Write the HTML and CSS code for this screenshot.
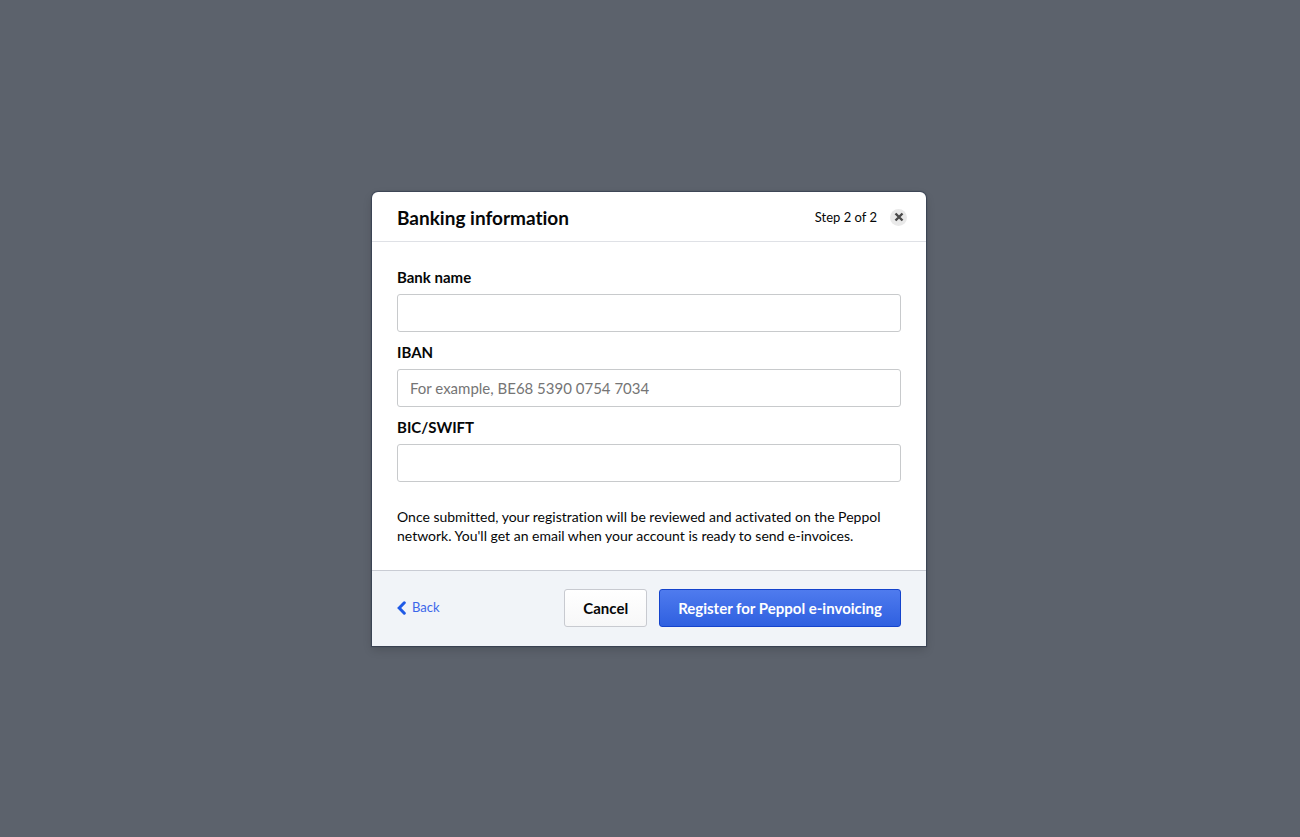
FILE: index.html
```html
<!DOCTYPE html>
<html lang="en">
<head>
    <meta charset="UTF-8">
    <meta name="viewport" content="width=device-width, initial-scale=1.0">
    <title>Banking information</title>
    <link rel="stylesheet" href="styles.css">
</head>
<body>
    <form class="modal" role="dialog" aria-labelledby="modal-title">
        <header class="modal-header">
            <h1 id="modal-title">Banking information</h1>
            <span class="step">Step 2 of 2</span>
            <button type="button" class="close" aria-label="Close">
                <svg width="10" height="10" viewBox="0 0 10 10"><path d="M1.500 1.500l7 7M8.500 1.500l-7 7" stroke="#4a4a4a" stroke-width="2.400"/></svg>
            </button>
        </header>

        <div class="modal-body">
            <div class="field">
                <label for="bank-name">Bank name</label>
                <input type="text" id="bank-name">
            </div>
            <div class="field">
                <label for="iban">IBAN</label>
                <input type="text" id="iban" placeholder="For example, BE68 5390 0754 7034">
            </div>
            <div class="field">
                <label for="bic">BIC/SWIFT</label>
                <input type="text" id="bic">
            </div>
            <p class="note">Once submitted, your registration will be reviewed and activated on the Peppol network. You'll get an email when your account is ready to send e-invoices.</p>
        </div>

        <footer class="modal-footer">
            <a href="#" class="back">
                <svg width="9" height="14" viewBox="0 0 9 14"><path d="M7.300 1.800L2.200 7l5.100 5.200" fill="none" stroke="#1f5ae6" stroke-width="3" stroke-linecap="round"/></svg>
                Back
            </a>
            <button type="button" class="btn">Cancel</button>
            <button type="submit" class="btn btn-primary">Register for Peppol e-invoicing</button>
        </footer>
    </form>
</body>
</html>
```

FILE: styles.css
```css
* {
    box-sizing: border-box;
}
body {
    margin: 0;
    padding-right: 2px;
    min-height: 100vh;
    display: flex;
    align-items: center;
    justify-content: center;
    background: #5c626c;
    color: #060708;
    font-family: Lato, sans-serif;
    font-size: 15px;
    line-height: 19px;
    font-variant-ligatures: none;
}
.modal {
    width: 100%;
    max-width: 554px;
    background: #fff;
    border-radius: 6px 6px 0 0;
    box-shadow: 0 0 1px 1px rgba(30, 41, 66, 0.5), 0 4px 10px rgba(0, 0, 0, 0.15);
}
.modal-header {
    display: flex;
    align-items: center;
    padding: 13px 19px 11px 25px;
    border-bottom: 1px solid #dfe1e6;
}
.modal-header h1 {
    flex: 1;
    margin: 0;
    font-size: 19px;
    line-height: 25px;
}
.step {
    font-size: 13px;
}
.close {
    display: flex;
    align-items: center;
    justify-content: center;
    width: 17px;
    height: 17px;
    margin-left: 13px;
    padding: 0;
    border: none;
    border-radius: 50%;
    background: #e9e9e9;
    cursor: pointer;
}
.modal-body {
    padding: 26px 25px 25px;
}
.field {
    margin-bottom: 11px;
}
.field label {
    display: block;
    margin-bottom: 7px;
    font-weight: bold;
}
.field input {
    display: block;
    width: 100%;
    height: 38px;
    padding: 0 12px;
    border: 1px solid #c8cacc;
    border-radius: 3px;
    font: inherit;
}
.field input::placeholder {
    color: #757575;
}
.note {
    margin: 25px 0 0;
    font-size: 14px;
}
.modal-footer {
    display: flex;
    align-items: center;
    gap: 12px;
    padding: 18px 25px 19px;
    border-top: 1px solid #c9ccd4;
    background: #f1f4f8;
}
.back {
    display: flex;
    align-items: center;
    gap: 6px;
    margin-right: auto;
    color: #3b66ea;
    font-size: 13px;
    text-decoration: none;
}
.btn {
    height: 38px;
    padding: 0 18px;
    border: 1px solid #c8cad0;
    border-radius: 3px;
    background: linear-gradient(#fff, #f7f7f8);
    color: #060708;
    font: bold 15px Lato, sans-serif;
    font-variant-ligatures: none;
    cursor: pointer;
}
.btn-primary {
    border-color: #1443cc;
    background: linear-gradient(#4f7bee, #2f60e0);
    color: #fff;
}
```
